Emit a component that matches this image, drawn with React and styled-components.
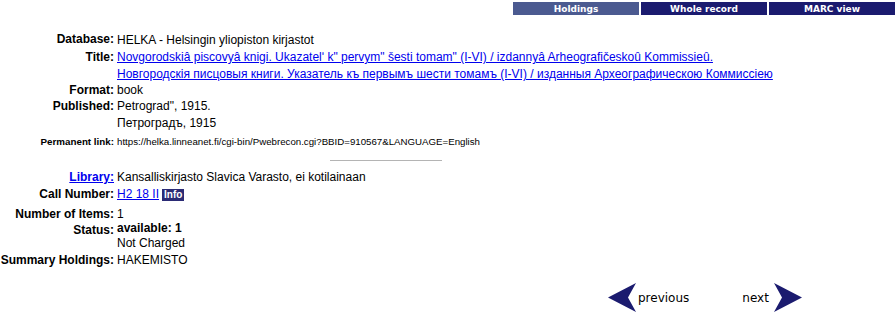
import React from 'react';
import styled, { createGlobalStyle } from 'styled-components';

const GlobalStyle = createGlobalStyle`
  body {
    margin: 0;
    background: #fff;
    font-family: "Liberation Sans", Arial, sans-serif;
    color: #000;
  }
`;

const Page = styled.div`
  width: 896px;
  height: 314px;
  overflow: hidden;
`;

const TabBar = styled.div`
  display: flex;
  justify-content: flex-end;
  gap: 2px;
  padding: 2px 1px 0 0;
`;

const Tab = styled.a`
  width: 126px;
  height: 13px;
  display: flex;
  align-items: center;
  justify-content: center;
  background: ${p => (p.$active ? '#4b5a90' : '#1b1b6f')};
  color: #fff;
  font-family: "DejaVu Sans", Verdana, sans-serif;
  font-weight: bold;
  font-size: 9px;
  text-decoration: none;
`;

const Record = styled.div`
  display: grid;
  grid-template-columns: 114px auto;
  column-gap: 3px;
  align-items: start;
  font-size: 12px;
  line-height: 16px;
  padding-top: ${p => p.$top || 0}px;
`;

const Label = styled.div`
  text-align: right;
  font-weight: bold;
  white-space: nowrap;
  font-size: ${p => p.$small ? '9.8px' : '12px'};
  margin-top: ${p => p.$gap || 0}px;
  a { color: #0000ee; }
`;

const Value = styled.div`
  white-space: nowrap;
  margin-top: ${p => p.$gap || 0}px;
  font-size: ${p => p.$small ? '9.7px' : '12px'};
`;

const Line = styled.div`
  height: ${p => p.$h || 16}px;
  line-height: ${p => p.$h || 16}px;
`;

const Link = styled.a`
  color: #0000ee;
  text-decoration: underline;
`;

const Info = styled.span`
  display: inline-block;
  background: #2b2b75;
  color: #fff;
  font-weight: bold;
  font-size: 10px;
  line-height: 12px;
  padding: 0 2px;
  margin-left: 3px;
`;

const Rule = styled.hr`
  width: 112px;
  margin: 10px 0 0 330px;
  border: 0;
  border-top: 1px solid #b4b4b4;
  height: 0;
`;

const Nav = styled.div`
  display: flex;
  align-items: center;
  padding: 15px 0 0 608px;
  font-family: "DejaVu Sans", Verdana, sans-serif;
`;

const NavItem = styled.a`
  display: flex;
  align-items: center;
  gap: ${p => p.$gap}px;
  color: #000;
  text-decoration: none;
  margin-left: ${p => p.$ml || 0}px;
  font-size: 12px;
`;

const Arrow = ({ dir }) => (
  <svg width="29" height="29" viewBox="0 0 29 29">
    {dir === 'left' ? (
      <polygon points="0,14.5 28,0 20,14.5 28,29" fill="#1b1b6f" />
    ) : (
      <polygon points="29,14.5 1,0 9,14.5 1,29" fill="#1b1b6f" />
    )}
  </svg>
);

export default function App() {
  return (
    <Page>
      <GlobalStyle />
      <TabBar>
        <Tab $active href="#">Holdings</Tab>
        <Tab href="#">Whole record</Tab>
        <Tab href="#">MARC view</Tab>
      </TabBar>

      <Record $top={16}>
        <Label>Database:</Label>
        <Value>
          <Line $h={18}>HELKA - Helsingin yliopiston kirjastot</Line>
        </Value>
        <Label>Title:</Label>
        <Value>
          <Line $h={17}>
            <Link href="#">Novgorodskiâ piscovyâ knigi. Ukazatelʹ k" pervym" šesti tomam" (I-VI) / izdannyâ Arheografičeskoû Kommissieû.</Link>
          </Line>
          <Line $h={16}>
            <Link href="#">Новгородскія писцовыя книги. Указатель къ первымъ шести томамъ (I-VI) / изданныя Археографическою Коммиссiею</Link>
          </Line>
        </Value>
        <Label>Format:</Label>
        <Value>
          <Line>book</Line>
        </Value>
        <Label>Published:</Label>
        <Value>
          <Line $h={17}>Petrograd", 1915.</Line>
          <Line $h={17}>Петроградъ, 1915</Line>
        </Value>
        <Label $small $gap={2}>Permanent link:</Label>
        <Value $small $gap={2}>
          <Line>https://helka.linneanet.fi/cgi-bin/Pwebrecon.cgi?BBID=910567&amp;LANGUAGE=English</Line>
        </Value>
      </Record>

      <Rule />

      <Record $top={8}>
        <Label><Link href="#">Library:</Link></Label>
        <Value>
          <Line $h={17}>Kansalliskirjasto Slavica Varasto, ei kotilainaan</Line>
        </Value>
        <Label>Call Number:</Label>
        <Value>
          <Line $h={17}><Link href="#">H2 18 II</Link><Info>Info</Info></Line>
        </Value>
        <Label $gap={3}>Number of Items:</Label>
        <Value $gap={3}>
          <Line>1</Line>
        </Value>
        <Label>Status:</Label>
        <Value>
          <Line $h={13}><b>available: 1</b></Line>
          <Line $h={17}>Not Charged</Line>
        </Value>
        <Label>Summary Holdings:</Label>
        <Value>
          <Line>HAKEMISTO</Line>
        </Value>
      </Record>

      <Nav>
        <NavItem href="#" $gap={1}>
          <Arrow dir="left" />
          <span>previous</span>
        </NavItem>
        <NavItem href="#" $gap={4} $ml={53}>
          <span>next</span>
          <Arrow dir="right" />
        </NavItem>
      </Nav>
    </Page>
  );
}
